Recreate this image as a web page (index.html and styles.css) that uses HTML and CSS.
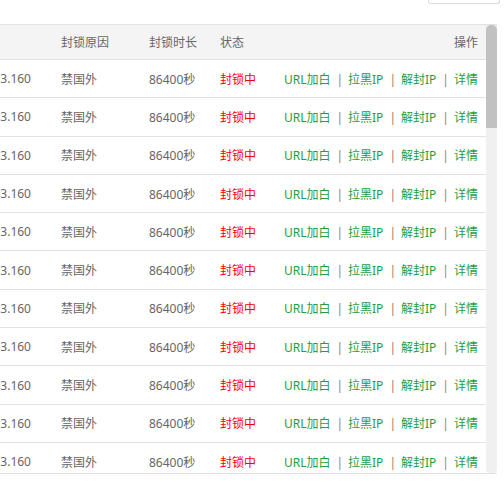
FILE: index.html
```html
<!DOCTYPE html>
<html lang="zh-CN">
<head>
<meta charset="utf-8">
<link rel="stylesheet" href="styles.css">
</head>
<body>
<div class="toolbar"><div class="tool-box"></div></div>
<div class="panel">
  <div class="table-area">
    <table class="grid">
      <colgroup>
        <col class="c1"><col class="c2"><col class="c3"><col class="c4"><col class="c5">
      </colgroup>
      <thead>
        <tr><th class="ip"></th><th>封锁原因</th><th>封锁时长</th><th>状态</th><th class="ops">操作</th></tr>
      </thead>
      <tbody id="rows"></tbody>
    </table>
  </div>
  <div class="scrollbar"><div class="thumb"></div></div>
</div>
<script src="app.js"></script>
</body>
</html>
```
FILE: app.js
```js
var tb = document.getElementById('rows');
var html = '';
for (var i = 0; i < 11; i++) {
  html += '<tr><td class="ip"><div class="ip-clip"><span>3.160</span></div></td><td>禁国外</td><td>86400秒</td>' +
    '<td class="blocked">封锁中</td>' +
    '<td class="ops"><a class="lk">URL加白</a><span class="sep">|</span>' +
    '<a class="lk">拉黑IP</a><span class="sep">|</span>' +
    '<a class="lk">解封IP</a><span class="sep">|</span>' +
    '<a class="lk">详情</a></td></tr>';
}
tb.innerHTML = html;
```
FILE: styles.css
```css
html, body {
  margin: 0;
  padding: 0;
  background: #fff;
}
body {
  width: 504px;
  height: 484px;
  overflow: hidden;
  font-family: "Noto Sans", "Noto Sans CJK SC", sans-serif;
  font-size: 12px;
  color: #666;
}
.toolbar {
  height: 24px;
  display: flex;
  justify-content: flex-end;
  align-items: flex-start;
  padding-right: 4px;
}
.tool-box {
  width: 70px;
  height: 3px;
  border: 1px solid #dcdcdc;
  border-top: 0;
  border-radius: 0 0 3px 3px;
}
.panel {
  width: 497px;
  height: 448px;
  border-top: 1px solid #e2e2e2;
  border-bottom: 1px solid #e2e2e2;
  display: flex;
  overflow: hidden;
}
.table-area {
  flex: 1;
  overflow: hidden;
}
.grid {
  width: 486px;
  table-layout: fixed;
  border-collapse: collapse;
}
.c1 { width: 46px; }
.c2 { width: 88px; }
.c3 { width: 71px; }
.c4 { width: 65px; }
.grid th {
  height: 34px;
  background: #f4f4f4;
  font-weight: normal;
  text-align: left;
  padding: 0 0 0 15px;
  border-bottom: 1px solid #e2e2e2;
  white-space: nowrap;
  overflow: hidden;
}
.grid td {
  height: 37.3px;
  padding: 0 0 0 15px;
  border-bottom: 1px solid #e2e2e2;
  white-space: nowrap;
  overflow: hidden;
}
.grid .ip {
  padding: 0 15px 0 0;
}
.ip-clip {
  display: flex;
  justify-content: flex-end;
}
.grid .ops {
  text-align: right;
  padding: 0 8px 0 0;
}
.blocked { color: #ff0000; }
.lk {
  color: #1f9e3d;
  cursor: pointer;
}
.sep {
  color: #9c7b66;
  margin: 0 5px 0 6px;
}
.scrollbar {
  width: 11px;
  background: #f0f0f0;
  border-radius: 0 0 4px 4px;
  display: flex;
  flex-direction: column;
}
.thumb {
  height: 103px;
  background: #c1c1c1;
  border-radius: 5px 5px 0 0;
}
```
